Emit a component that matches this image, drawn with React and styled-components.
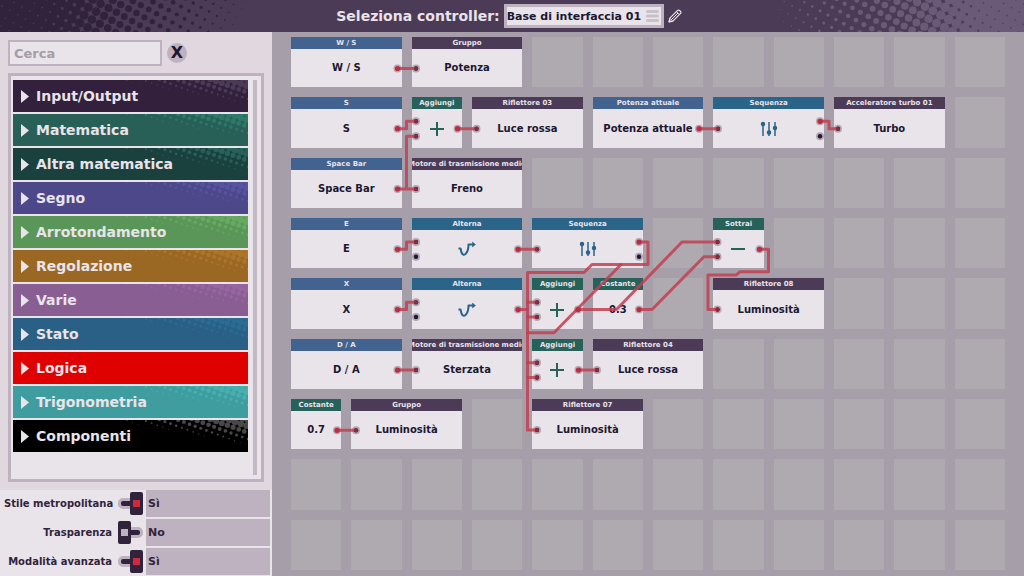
import React, { useState } from "react";
import styled, { createGlobalStyle, ThemeProvider } from "styled-components";

const theme = {
  ink: "#201730",
  night: "#32233c",
  plum: "#4c3b56",
  paper: "#e9e3ea",
  panel: "#e0d7df",
  line: "#bfb2c0",
  wire: "#c23f50",
  kinds: {
    input: "#42628f",
    output: "#4c3b56",
    math: "#27625a",
    state: "#2a6488",
  },
};

const GlobalStyle = createGlobalStyle`
  *, *::before, *::after { box-sizing: border-box; }
  body {
    margin: 0;
    background: #a69fa9;
    color: ${theme.ink};
    font-family: "DejaVu Sans", Verdana, sans-serif;
    font-weight: 700;
  }
  button, input, select { font: inherit; color: inherit; }
`;

const Page = styled.div`
  min-height: 100vh;
  display: flex;
  flex-direction: column;
`;

/* ---------- header ---------- */

const Header = styled.header`
  position: relative;
  height: 32px;
  flex: none;
  display: flex;
  align-items: center;
  justify-content: center;
  gap: 4px;
  padding-right: 6px;
  background: ${(p) => p.theme.plum};
  overflow: hidden;
`;

const HeaderDots = styled.svg`
  position: absolute;
  top: 0;
  height: 32px;
  width: 280px;
  ${(p) => (p.$side === "left" ? "left: 0;" : "right: 0;")}
`;

const HeaderLabel = styled.label`
  font-size: 14px;
  line-height: 20px;
  color: ${(p) => p.theme.paper};
  white-space: nowrap;
`;

const SelectBox = styled.div`
  position: relative;
  display: flex;
`;

const Select = styled.select`
  appearance: none;
  width: 160px;
  height: 24px;
  padding: 0;
  border: 3px solid ${(p) => p.theme.line};
  border-radius: 0;
  background: ${(p) => p.theme.paper};
  font-size: 11px;
`;

const SelectIcon = styled.svg`
  position: absolute;
  right: 5px;
  top: 5px;
  width: 13px;
  height: 14px;
  pointer-events: none;
`;

const IconButton = styled.button`
  display: flex;
  padding: 0;
  border: 0;
  background: none;
  position: relative;
`;

/* ---------- sidebar ---------- */

const Main = styled.div`
  flex: 1;
  display: flex;
`;

const Sidebar = styled.aside`
  flex: none;
  width: 272px;
  display: flex;
  flex-direction: column;
  background: ${(p) => p.theme.panel};
`;

const SearchRow = styled.div`
  display: flex;
  align-items: center;
  gap: 5px;
  padding: 8px 8px 7px;
`;

const SearchInput = styled.input`
  width: 154px;
  height: 26px;
  padding: 0 4px;
  border: 2px solid ${(p) => p.theme.line};
  border-radius: 0;
  background: ${(p) => p.theme.paper};
  font-size: 13px;
  &::placeholder { color: #a59da6; opacity: 1; }
`;

const ClearButton = styled.button`
  width: 20px;
  height: 20px;
  display: flex;
  align-items: center;
  justify-content: center;
  padding: 0;
  border: 0;
  border-radius: 50%;
  background: ${(p) => p.theme.line};
  font-size: 16px;
  line-height: 20px;
`;

const ListPanel = styled.div`
  flex: 1;
  display: flex;
  gap: 5px;
  margin: 0 8px 8px;
  padding: 4px 4px 4px 2px;
  border: 3px solid ${(p) => p.theme.line};
  background: ${(p) => p.theme.paper};
`;

const CategoryList = styled.nav`
  flex: 1;
  display: flex;
  flex-direction: column;
  gap: 2px;
`;

const ScrollThumb = styled.div`
  width: 4px;
  background: #c3b8c5;
`;

const CategoryButton = styled.button`
  position: relative;
  height: 32px;
  display: flex;
  align-items: center;
  gap: 7px;
  padding: 0 8px;
  border: 0;
  background: ${(p) => p.$color};
  color: ${(p) => p.theme.paper};
  font-size: 14px;
  line-height: 20px;
  overflow: hidden;
  text-align: left;
`;

const CategoryDots = styled.svg`
  position: absolute;
  right: 0;
  top: 0;
  width: 140px;
  height: 32px;
`;

const Arrow = styled.svg`
  width: 8px;
  height: 13px;
  flex: none;
`;

const CategoryName = styled.span`
  position: relative;
`;

/* ---------- options ---------- */

const Options = styled.div`
  display: flex;
  flex-direction: column;
  gap: 2px;
  padding: 0 2px 1px 0;
  background: ${(p) => p.theme.paper};
`;

const OptionRow = styled.label`
  display: flex;
  align-items: center;
  height: 27px;
  padding-left: 4px;
`;

const OptionName = styled.span`
  width: 108px;
  text-align: right;
  white-space: nowrap;
  font-size: 10px;
  line-height: 16px;
  color: ${(p) => p.theme.night};
`;

const Toggle = styled.input`
  appearance: none;
  flex: none;
  position: relative;
  width: 25px;
  height: 23px;
  margin: 0 3px 0 6px;
  &::before {
    content: "";
    position: absolute;
    inset: 6px 0;
    border: 3px solid ${(p) => p.theme.line};
    border-radius: 5px;
    background: ${(p) => p.theme.night};
  }
  &::after {
    content: "";
    position: absolute;
    top: 0;
    left: 0;
    width: 13px;
    height: 23px;
    border: solid ${(p) => p.theme.night};
    border-width: 8px 3px;
    border-radius: 2px;
    background: ${(p) => p.theme.line};
  }
  &:checked::after {
    left: 12px;
    background: #d2283c;
  }
`;

const OptionValue = styled.span`
  flex: 1;
  align-self: stretch;
  padding-left: 2px;
  background: ${(p) => p.theme.line};
  color: ${(p) => p.theme.night};
  font-size: 11px;
  line-height: 27px;
`;

/* ---------- board ---------- */

const Board = styled.main`
  flex: 1;
  min-width: 0;
  padding: 5px 19px 6px;
`;

const Grid = styled.div`
  position: relative;
  display: grid;
  grid-template-columns: repeat(12, minmax(0, 1fr));
  gap: 10px;
`;

const EmptyCell = styled.div`
  aspect-ratio: 1;
  background: #afa9b0;
`;

const Card = styled.article`
  grid-column: span ${(p) => p.$span};
  min-width: 0;
  display: flex;
  flex-direction: column;
  background: ${(p) => p.theme.paper};
`;

const CardTitle = styled.header`
  height: 12px;
  display: flex;
  justify-content: center;
  overflow: hidden;
  background: ${(p) => p.theme.kinds[p.$kind]};
  color: ${(p) => p.theme.paper};
  font-size: 7px;
  line-height: 12px;
  white-space: nowrap;
`;

const CardBody = styled.div`
  flex: 1;
  display: flex;
  align-items: center;
  justify-content: center;
  font-size: 10px;
  line-height: 16px;
  white-space: nowrap;
`;

const Glyph = styled.svg`
  width: 22px;
  height: 18px;
`;

const Wires = styled.svg`
  position: absolute;
  inset: 0;
  width: 100%;
  height: 100%;
  pointer-events: none;
`;

/* Halftone: a tilted lattice of dots whose radius is given by size(x, y). */
function halftone(width, height, step, angle, size) {
  const dots = [];
  const c = Math.cos(angle) * step;
  const s = Math.sin(angle) * step;
  const n = Math.ceil((width + height) / step);
  for (let i = -n; i <= n; i++) {
    for (let j = -n; j <= n; j++) {
      const x = i * c - j * s;
      const y = i * s + j * c;
      if (x < -step || x > width + step || y < -step || y > height + step) continue;
      const r = size(x, y);
      if (r > 0.3) dots.push([x.toFixed(1), y.toFixed(1), r.toFixed(2)]);
    }
  }
  return dots;
}

const clamp = (v, max) => Math.max(0, Math.min(max, v));
const leftDots = halftone(280, 32, 9, 0.5, (x, y) => clamp(((262 - x - y * 0.4) / 262) * 7, 5.8));
const rightDots = halftone(280, 32, 9, 0.5, (x, y) => clamp(((x - 14 - y * 0.3) / 262) * 6.8, 5.8));
const categoryDots = halftone(140, 32, 6, 0.35, (x, y) =>
  clamp(((x / 140) * 26 - y) * 0.15 + 0.2, 3.6)
);

function Dots({ dots, color }) {
  return (
    <g fill={color}>
      {dots.map(([x, y, r]) => (
        <circle key={x + "," + y} cx={x} cy={y} r={r} />
      ))}
    </g>
  );
}

const CATEGORIES = [
  ["Input/Output", "#32203c", "#4c3b56"],
  ["Matematica", "#286058", "#2d7a69"],
  ["Altra matematica", "#1b413e", "#27625a"],
  ["Segno", "#4c488a", "#5853a0"],
  ["Arrotondamento", "#5b9659", "#66a961"],
  ["Regolazione", "#9b6824", "#ac752a"],
  ["Varie", "#895e92", "#9766a0"],
  ["Stato", "#2a6086", "#2b6c95"],
  ["Logica", "#df0000", "#df0000"],
  ["Trigonometria", "#409d9f", "#47b0ae"],
  ["Componenti", "#000000", "#484848"],
];

const card = (kind, span, title, label, glyph) => ({ kind, span, title, label, glyph });

/* A number stands for that many empty cells. */
const ROWS = [
  [card("input", 2, "W / S", "W / S"), card("output", 2, "Gruppo", "Potenza"), 8],
  [
    card("input", 2, "S", "S"),
    card("math", 1, "Aggiungi", null, "plus"),
    card("output", 2, "Riflettore 03", "Luce rossa"),
    card("input", 2, "Potenza attuale", "Potenza attuale"),
    card("state", 2, "Sequenza", null, "sliders"),
    card("output", 2, "Acceleratore turbo 01", "Turbo"),
    1,
  ],
  [card("input", 2, "Space Bar", "Space Bar"), card("output", 2, "Motore di trasmissione medio", "Freno"), 8],
  [
    card("input", 2, "E", "E"),
    card("state", 2, "Alterna", null, "toggle"),
    card("state", 2, "Sequenza", null, "sliders"),
    1,
    card("math", 1, "Sottrai", null, "minus"),
    4,
  ],
  [
    card("input", 2, "X", "X"),
    card("state", 2, "Alterna", null, "toggle"),
    card("math", 1, "Aggiungi", null, "plus"),
    card("math", 1, "Costante", "0.3"),
    1,
    card("output", 2, "Riflettore 08", "Luminosità"),
    3,
  ],
  [
    card("input", 2, "D / A", "D / A"),
    card("output", 2, "Motore di trasmissione medio", "Sterzata"),
    card("math", 1, "Aggiungi", null, "plus"),
    card("output", 2, "Riflettore 04", "Luce rossa"),
    5,
  ],
  [
    card("math", 1, "Costante", "0.7"),
    card("output", 2, "Gruppo", "Luminosità"),
    1,
    card("output", 2, "Riflettore 07", "Luminosità"),
    6,
  ],
  [12],
  [12],
];

const GLYPHS = {
  plus: <path d="M11 2v14M4 9h14" stroke="#27625a" strokeWidth="2" />,
  minus: <path d="M4 9h14" stroke="#27625a" strokeWidth="2" />,
  sliders: (
    <g stroke="#2a6488" strokeWidth="1.500" fill="#2a6488">
      <path d="M5 2v14M11 2v14M17 2v14" />
      <circle cx="5" cy="4" r="1.500" />
      <circle cx="11" cy="12.500" r="1.500" />
      <circle cx="17" cy="8" r="1.500" />
    </g>
  ),
  toggle: (
    <g stroke="#2a6488" strokeWidth="2" fill="none">
      <path d="M2.500 8.500H4.500L5.500 12.500Q7 16 9.500 14Q12.500 11 12.500 4.500H17" strokeLinejoin="round" />
      <path d="M16.500 2L19.500 4.500L16.500 7Z" fill="#2a6488" strokeWidth="0.500" />
    </g>
  ),
};

/* Wire routes on the board, whose drawing area is 714 by 533. */
const WIRES = [
  "M106.500 31.500H125",
  "M106.500 91.700H115.500V84.300H125",
  "M106.500 152H125M115.500 152V99.300H125",
  "M166.500 91.700H185.500",
  "M408 91.700H427",
  "M529 84.300H538V91.700H547",
  "M106.500 212.300H115.500V205H125",
  "M227 212.300H246",
  "M106.500 272.500H115.500V265.300H125",
  "M227 272.500H236.500",
  "M106.500 333H125",
  "M348 205H357V227.500H301L293 235.500H236.500V393H246",
  "M236.500 265.300H246M236.500 280H246M236.500 325.700H246M236.500 340.500H246",
  "M330 227.500L263 295.700H236.500",
  "M287 272.500H325.500L391 205H426.500",
  "M348 272.500H361L413 219.700H426.500",
  "M468.500 212.300H477.500V234.700H449L445 238H417V272.500H426.500",
  "M287.500 333H306",
  "M46 393.300H65",
];

const OUTPUTS = [
  [106.5, 31.5], [106.5, 91.7], [106.5, 152], [166.5, 91.7], [408, 91.7], [529, 84.3],
  [106.5, 212.3], [227, 212.3], [106.5, 272.5], [227, 272.5], [106.5, 333], [348, 205],
  [287, 272.5], [348, 272.5], [468.5, 212.3], [287.5, 333], [46, 393.3],
];

const INPUTS = [
  [125, 31.5], [125, 84.3], [125, 99.3], [125, 152], [185.5, 91.7], [427, 91.7], [547, 91.7],
  [125, 205], [246, 212.3], [125, 265.3], [125, 333], [246, 393], [246, 265.3], [246, 280],
  [246, 325.7], [246, 340.5], [426.5, 205], [426.5, 219.7], [426.5, 272.5], [306, 333], [65, 393.3],
];

const FREE_PORTS = [[529, 99.3], [125, 219.7], [125, 280], [348, 219.7]];

function WireLayer() {
  return (
    <Wires viewBox="0 0 714 533" preserveAspectRatio="none" aria-hidden="true">
      <g fill="#b5a6b1">
        {[...OUTPUTS, ...INPUTS, ...FREE_PORTS].map(([x, y]) => (
          <circle key={x + "," + y} cx={x} cy={y} r="4" />
        ))}
      </g>
      <g fill="#201730">
        {[...INPUTS, ...FREE_PORTS].map(([x, y]) => (
          <circle key={x + "," + y} cx={x} cy={y} r="2.200" />
        ))}
      </g>
      <g fill="none" stroke={theme.wire} strokeOpacity="0.850" strokeWidth="3" strokeLinejoin="round" strokeLinecap="round">
        {WIRES.map((d) => (
          <path key={d} d={d} />
        ))}
      </g>
      <g fill="#b92d42">
        {OUTPUTS.map(([x, y]) => (
          <circle key={x + "," + y} cx={x} cy={y} r="2.600" />
        ))}
      </g>
      <g fill="#8d2a3e">
        {INPUTS.map(([x, y]) => (
          <circle key={x + "," + y} cx={x} cy={y} r="2" />
        ))}
      </g>
    </Wires>
  );
}

function BoardItem({ item }) {
  if (typeof item === "number") {
    return Array.from({ length: item }, (_, i) => <EmptyCell key={i} />);
  }
  return (
    <Card $span={item.span}>
      <CardTitle $kind={item.kind}>{item.title}</CardTitle>
      <CardBody>
        {item.glyph ? (
          <Glyph viewBox="0 0 22 18" aria-hidden="true">{GLYPHS[item.glyph]}</Glyph>
        ) : (
          item.label
        )}
      </CardBody>
    </Card>
  );
}

function Option({ name, initial }) {
  const [on, setOn] = useState(initial);
  return (
    <OptionRow>
      <OptionName>{name}</OptionName>
      <Toggle type="checkbox" checked={on} onChange={() => setOn(!on)} />
      <OptionValue>{on ? "Sì" : "No"}</OptionValue>
    </OptionRow>
  );
}

export default function App() {
  const [query, setQuery] = useState("");
  return (
    <ThemeProvider theme={theme}>
      <GlobalStyle />
      <Page>
        <Header>
          <HeaderDots $side="left" viewBox="0 0 280 32" aria-hidden="true">
            <Dots dots={leftDots} color="#32233c" />
          </HeaderDots>
          <HeaderDots $side="right" viewBox="0 0 280 32" aria-hidden="true">
            <Dots dots={rightDots} color="#6b5a77" />
          </HeaderDots>
          <HeaderLabel htmlFor="controller">Seleziona controller:</HeaderLabel>
          <SelectBox>
            <Select id="controller">
              <option>Base di interfaccia 01</option>
            </Select>
            <SelectIcon viewBox="0 0 13 14" aria-hidden="true">
              <path d="M1.500 2.500h10M1.500 7h10M1.500 11.500h10" stroke="#c8c1c9" strokeWidth="3" strokeLinecap="round" />
            </SelectIcon>
          </SelectBox>
          <IconButton type="button" aria-label="Rinomina">
            <svg width="14" height="14" viewBox="0 0 14 14" fill="none" stroke="#e9e3ea" strokeLinejoin="round">
              <path d="M1 13L1.800 9.200L9.600 1.400Q10.600 .6 11.600 1.500L12.500 2.400Q13.400 3.400 12.600 4.400L4.800 12.200Z" strokeWidth="1.200" />
              <path d="M8.400 2.600L11.400 5.600M3.300 10.700L10 4M1.800 9.200L4.800 12.200" strokeWidth="1" />
              <path d="M1 13L1.500 11L3 12.500Z" fill="#e9e3ea" />
            </svg>
          </IconButton>
        </Header>
        <Main>
          <Sidebar>
            <SearchRow>
              <SearchInput
                aria-label="Cerca"
                placeholder="Cerca"
                value={query}
                onChange={(e) => setQuery(e.target.value)}
              />
              <ClearButton type="button" onClick={() => setQuery("")}>X</ClearButton>
            </SearchRow>
            <ListPanel>
              <CategoryList>
                {CATEGORIES.map(([name, color, dotColor]) => (
                  <CategoryButton key={name} type="button" $color={color}>
                    <CategoryDots viewBox="0 0 140 32" aria-hidden="true">
                      <Dots dots={categoryDots} color={dotColor} />
                    </CategoryDots>
                    <Arrow viewBox="0 0 8 13" aria-hidden="true">
                      <path d="M0 0L8 6.500L0 13Z" fill="#e9e3ea" />
                    </Arrow>
                    <CategoryName>{name}</CategoryName>
                  </CategoryButton>
                ))}
              </CategoryList>
              <ScrollThumb />
            </ListPanel>
            <Options>
              <Option name="Stile metropolitana" initial={true} />
              <Option name="Trasparenza" initial={false} />
              <Option name="Modalità avanzata" initial={true} />
            </Options>
          </Sidebar>
          <Board>
            <Grid>
              {ROWS.flatMap((row, r) => row.map((item, i) => <BoardItem key={r + "-" + i} item={item} />))}
              <WireLayer />
            </Grid>
          </Board>
        </Main>
      </Page>
    </ThemeProvider>
  );
}
